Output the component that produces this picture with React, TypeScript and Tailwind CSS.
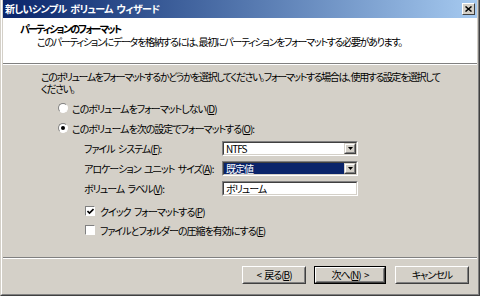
import React from 'react';

const Sunken: React.FC<{ className?: string; children?: React.ReactNode }> = ({ className = '', children }) => (
  <div className={`border border-t-[#808080] border-l-[#808080] border-r-white border-b-white ${className}`}>
    <div className="h-full border border-t-[#404040] border-l-[#404040] border-r-[#d4d0c8] border-b-[#d4d0c8] bg-white flex items-stretch">
      {children}
    </div>
  </div>
);

const DropButton: React.FC = () => (
  <div className="w-[12px] border border-t-[#d4d0c8] border-l-[#d4d0c8] border-r-[#404040] border-b-[#404040] bg-[#d4d0c8]">
    <div className="h-full border border-t-white border-l-white border-r-[#808080] border-b-[#808080] flex items-center justify-center">
      <svg width="5" height="3" viewBox="0 0 5 3">
        <path d="M0 0h5L2.5 3z" fill="#000" />
      </svg>
    </div>
  </div>
);

const Radio: React.FC<{ checked?: boolean }> = ({ checked }) => (
  <span className="w-[10px] h-[10px] rounded-full bg-white border border-t-[#808080] border-l-[#808080] border-r-white border-b-white flex items-center justify-center shrink-0">
    {checked && <span className="w-[4px] h-[4px] rounded-full bg-black" />}
  </span>
);

const Check: React.FC<{ checked?: boolean }> = ({ checked }) => (
  <span className="w-[10px] h-[10px] bg-white border border-t-[#808080] border-l-[#808080] border-r-white border-b-white flex items-center justify-center shrink-0">
    {checked && (
      <svg width="7" height="7" viewBox="0 0 7 7">
        <path d="M0.5 3l2 2 4-4" stroke="#000" strokeWidth="1.6" fill="none" />
      </svg>
    )}
  </span>
);

const Button: React.FC<{ className?: string; isDefault?: boolean; children: React.ReactNode }> = ({ className = '', isDefault, children }) => (
  <div className={`h-[18px] ${isDefault ? 'border border-black' : ''} ${className}`}>
    <div className="h-full border border-t-white border-l-white border-r-[#404040] border-b-[#404040]">
      <div className="h-full border border-r-[#808080] border-b-[#808080] border-t-[#d4d0c8] border-l-[#d4d0c8] flex items-center justify-center leading-none whitespace-nowrap">
        {children}
      </div>
    </div>
  </div>
);

export default function App() {
  return (
    <div className="w-[480px] h-[296px] overflow-hidden bg-[#d4d0c8] font-['Noto_Sans_CJK_JP',sans-serif] text-[10px] text-black [font-feature-settings:'palt'] tracking-[-1px] [word-spacing:2px]">
      <div className="h-full border-l border-r border-b border-l-[#d4d0c8] border-r-[#404040] border-b-[#404040]">
        <div className="h-full flex flex-col border-l border-r border-b border-l-white border-r-[#808080] border-b-[#808080] px-px pb-px">
          {/* title bar */}
          <div className="h-[18px] flex items-center bg-linear-to-r from-[#0a246a] to-[#a6caf0] pl-[2px] pr-[2px]">
            <span className="text-white font-bold leading-none tracking-[-0.6px]">新しいシンプル ボリューム ウィザード</span>
            <div className="ml-auto w-[13px] h-[12px] border border-t-white border-l-white border-r-[#404040] border-b-[#404040] bg-[#d4d0c8] flex items-center justify-center">
              <svg width="7" height="6" viewBox="0 0 7 6">
                <path d="M0.5 0.5l6 5M6.5 0.5l-6 5" stroke="#000" strokeWidth="1.5" />
              </svg>
            </div>
          </div>

          {/* header */}
          <div className="h-[46px] bg-white pt-[4px] border-b border-b-[#808080] whitespace-nowrap">
            <div className="pl-[17px] font-bold leading-[13px] tracking-[-1.8px]">パーティションのフォーマット</div>
            <div className="pl-[34px] leading-[13px] tracking-[-1.3px]">
              このパーティションにデータを格納するには、最初にパーティションをフォーマットする必要があります。
            </div>
          </div>
          <div className="h-px bg-white" />

          {/* body */}
          <div className="flex-1 flex flex-col whitespace-nowrap">
            <p className="mt-[6px] ml-[38px] leading-[12px] tracking-[-1.4px]">
              このボリュームをフォーマットするかどうかを選択してください。フォーマットする場合は、使用する設定を選択して
              <br />
              ください。
            </p>

            <div className="mt-[6px] h-[14px] ml-[55px] flex items-center gap-[4px]">
              <Radio />
              <span>このボリュームをフォーマットしない(<u>D</u>)</span>
            </div>
            <div className="mt-[6px] h-[14px] ml-[55px] flex items-center gap-[4px]">
              <Radio checked />
              <span>このボリュームを次の設定でフォーマットする(<u>O</u>):</span>
            </div>

            <div className="mt-[6px] ml-[81px] grid grid-cols-[138px_136px] gap-y-[5px] items-center">
              <span>ファイル システム(<u>F</u>):</span>
              <Sunken className="h-[15px]">
                <span className="flex-1 pl-[2px] leading-[11px]">NTFS</span>
                <DropButton />
              </Sunken>
              <span>アロケーション ユニット サイズ(<u>A</u>):</span>
              <Sunken className="h-[15px]">
                <span className="flex-1 bg-[#0a246a] text-white pl-[2px] leading-[11px]">既定値</span>
                <DropButton />
              </Sunken>
              <span>ボリューム ラベル(<u>V</u>):</span>
              <Sunken className="h-[15px]">
                <span className="flex-1 pl-[2px] leading-[11px]">ボリューム</span>
              </Sunken>
            </div>

            <div className="mt-[8px] h-[14px] ml-[82px] flex items-center gap-[5px]">
              <Check checked />
              <span>クイック フォーマットする(<u>P</u>)</span>
            </div>
            <div className="mt-[5px] h-[14px] ml-[82px] flex items-center gap-[5px]">
              <Check />
              <span>ファイルとフォルダーの圧縮を有効にする(<u>E</u>)</span>
            </div>
          </div>

          {/* separator + buttons */}
          <div className="h-px bg-[#808080]" />
          <div className="h-px bg-white" />
          <div className="h-[34px] flex items-start justify-end pt-[7px] pr-[8px]">
            <Button className="w-[64px]">&lt; 戻る(<u>B</u>)</Button>
            <Button className="w-[72px] ml-[8px]" isDefault>
              次へ(<u>N</u>) &gt;
            </Button>
            <Button className="w-[74px] ml-[9px]">キャンセル</Button>
          </div>
        </div>
      </div>
    </div>
  );
}
